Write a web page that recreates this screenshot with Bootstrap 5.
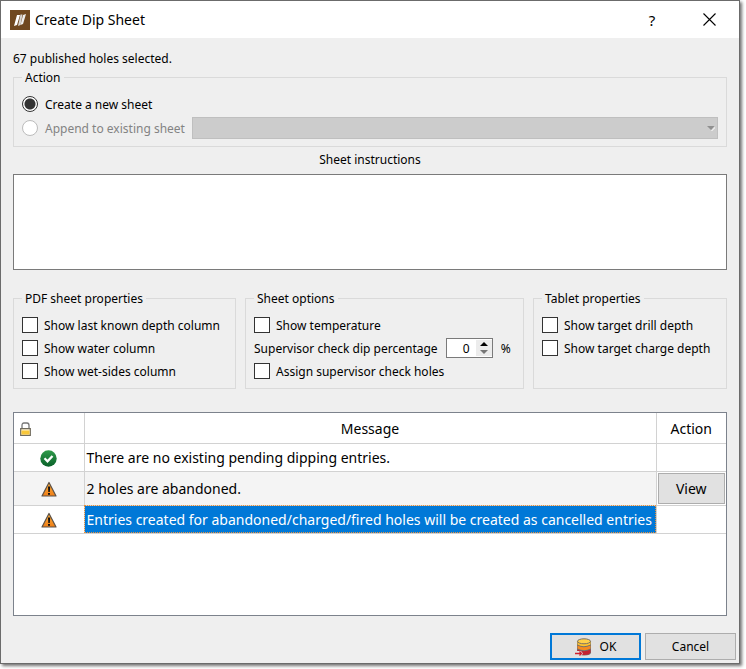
<!DOCTYPE html>
<html lang="en">
<head>
<meta charset="utf-8">
<meta name="viewport" content="width=device-width, initial-scale=1">
<title>Create Dip Sheet</title>
<link href="https://cdn.jsdelivr.net/npm/bootstrap@5.3.0/dist/css/bootstrap.min.css" rel="stylesheet">
<style>
  body { background: #fff; color: #000; font: 12px/16px "Noto Sans", "Open Sans", sans-serif; }
  .stage { padding: 0 6px 5px 0; }
  .dialog { background: #efefef; border: 1px solid #6b6b6b; box-shadow: 2px 2px 3px rgba(0,0,0,.55); }
  .titlebar { background: #fff; height: 37px; padding: 0 11px 0 9px; font-size: 14px; }
  .titlebar button { width: 38px; height: 30px; padding: 0; border: 0; background: none; color: #000; font-size: 15px; line-height: 20px; display: flex; align-items: center; justify-content: center; }
  .titlebar .gap-wide { gap: 19px; }
  .titlebar .gap-title { gap: 5px; }
  .content-area { padding: 13px 12px 0; }
  .count { margin-bottom: 1px; }
  .group { border: 1px solid #dadada; padding: 8px 8px 7px; min-width: 0; margin: 0; }
  .group legend { float: none; width: auto; margin: 0; padding: 1px 3px 0; font-size: 12px; line-height: 17px; }
  .group .stack { display: flex; flex-direction: column; gap: 3px; }
  .line { display: flex; align-items: center; min-height: 20px; gap: 6px; white-space: nowrap; }
  .line label, .unit { padding-top: 2px; }
  .line .form-check-input { flex: none; width: 16px; height: 16px; margin: 0; border: 1px solid #333; background-color: #fff; box-shadow: none; }
  .line .form-check-input[type=checkbox] { border-radius: 0; }
  .line .form-check-input[type=radio]:checked { background: #fff radial-gradient(circle, #333 0 5px, transparent 6px); border-color: #333; }
  .line .form-check-input:disabled { opacity: 1; border-color: #bcbcbc; }
  .line .muted-label { color: #838383; opacity: 1; }
  .action-group { padding-top: 7px; }
  .action-group .stack { gap: 2px; }
  .action-group .line { min-height: 22px; gap: 7px; }
  .sheet-select { height: 22px; min-height: 0; border: 1px solid #bfbfbf; border-radius: 0; padding: 0 16px 0 4px; font-size: 12px; background: #ccc url("data:image/svg+xml,%3Csvg xmlns='http://www.w3.org/2000/svg' viewBox='0 0 8 5'%3E%3Cpath d='M4 5h1l3-3V1z' fill='%23fff'/%3E%3Cpath d='M0 0h7.500L4 4z' fill='%23909090'/%3E%3C/svg%3E") no-repeat right 2px center / 8px 5px; }
  .sheet-select:disabled { background-color: #ccc; }
  .caption-label { margin-top: 5px; }
  .instructions { display: block; height: 96px; border: 1px solid #7a7a7a; border-radius: 0; resize: none; padding: 4px; margin: 6px 0 19px; font-size: 12px; background: #fff; }
  .options { display: grid; grid-template-columns: 223fr 279fr 194fr; gap: 9px; }
  .line.percent { gap: 8px; }
  .spin { display: flex; width: 47px; height: 20px; border: 1px solid #7a7a7a; background: #fff; }
  .spin input { width: 26px; border: 0; padding: 1px 3px 0 0; text-align: right; font: inherit; background: none; appearance: textfield; -moz-appearance: textfield; }
  .spin input::-webkit-inner-spin-button { display: none; }
  .spin .arrows { display: flex; flex-direction: column; width: 16px; margin: 1px 0 1px 3px; }
  .spin button { flex: 1; display: flex; align-items: center; justify-content: center; border: 0; padding: 0; background: #ececec; min-height: 0; }
  .spin .up { align-items: flex-end; padding-bottom: 2px; }
  .spin .down { align-items: flex-start; padding-top: 2px; }
  .messages { background: #fff; border: 1px solid #7c828c; margin-top: 23px; min-height: 120px; overflow: hidden; }
  .messages table { width: 100%; table-layout: fixed; border-collapse: collapse; font-size: 14px; line-height: 20px; }
  .messages th, .messages td { padding: 2px 2px 0; border: solid #d2d2d2; border-width: 0 1px 1px 0; vertical-align: middle; overflow: hidden; white-space: nowrap; font-weight: 400; }
  .messages tr > :last-child { border-right: 0; }
  .messages thead tr { height: 30px; }
  .messages th { text-align: center; }
  .messages th:first-child { text-align: left; padding-left: 6px; }
  .messages tbody tr { height: 28px; }
  .messages tbody tr.tall { height: 34px; }
  .messages tr.tall td:not(:last-child) { background: #f4f4f4; }
  .messages td:first-child { text-align: center; }
  .messages svg { display: block; }
  .messages td svg { margin: 0 auto; }
  .messages td.chosen { background: #0078d7; color: #fff; outline: 1px dotted #e8913c; outline-offset: -1px; }
  .messages td.action-cell { padding: 1px; }
  .push { border: 1px solid #adadad; background: #e1e1e1; color: #000; border-radius: 0; padding: 0; font-size: 12px; line-height: 16px; }
  .push.view { width: 100%; height: 31px; padding-top: 2px; font-size: 14px; display: block; }
  .footer-bar { padding: 17px 3px 3px; gap: 4px; }
  .footer-bar .push { width: 91px; height: 27px; }
  .push.primary { border: 2px solid #0078d7; }
</style>
</head>
<body>
<div class="stage d-flex flex-column min-vh-100">
  <main class="dialog d-flex flex-column flex-grow-1">
    <header class="titlebar d-flex align-items-center justify-content-between">
      <div class="d-flex align-items-center gap-title">
        <svg width="20" height="20" viewBox="0 0 20 20" aria-hidden="true"><path fill="#704820" d="M0 0h20v20H0z"/><path fill="#fff" d="M7 5h3L7 15l-3 1z"/><path fill="#d8d4d0" d="M10.500 4.500H12.500L10.500 15 8 16z"/><path fill="#eee" d="M13 5l3-1-3 10-2.500 1z"/></svg>
        <span>Create Dip Sheet</span>
      </div>
      <div class="d-flex gap-wide">
        <button type="button" aria-label="Help">?</button>
        <button type="button" aria-label="Close"><svg width="13" height="13" viewBox="0 0 13 13"><path d="M.5.500l12 12M12.500.500l-12 12" stroke="#000" stroke-width="1.100"/></svg></button>
      </div>
    </header>
    <form class="d-flex flex-column flex-grow-1">
      <div class="content-area d-flex flex-column flex-grow-1">
        <div class="count">67 published holes selected.</div>
        <fieldset class="group action-group">
          <legend>Action</legend>
          <div class="stack">
            <div class="line"><input class="form-check-input" type="radio" name="mode" id="create" checked><label for="create">Create a new sheet</label></div>
            <div class="line"><input class="form-check-input" type="radio" name="mode" id="append" disabled><label class="muted-label" for="append">Append to existing sheet</label><select class="form-select sheet-select" aria-label="Existing sheet" disabled></select></div>
          </div>
        </fieldset>
        <label class="caption-label text-center" for="instructions">Sheet instructions</label>
        <textarea class="form-control instructions" id="instructions"></textarea>
        <div class="options">
          <fieldset class="group">
            <legend>PDF sheet properties</legend>
            <div class="stack">
              <div class="line"><input class="form-check-input" type="checkbox" id="depth"><label for="depth">Show last known depth column</label></div>
              <div class="line"><input class="form-check-input" type="checkbox" id="water"><label for="water">Show water column</label></div>
              <div class="line"><input class="form-check-input" type="checkbox" id="wet"><label for="wet">Show wet-sides column</label></div>
            </div>
          </fieldset>
          <fieldset class="group">
            <legend>Sheet options</legend>
            <div class="stack">
              <div class="line"><input class="form-check-input" type="checkbox" id="temp"><label for="temp">Show temperature</label></div>
              <div class="line percent"><label for="pct">Supervisor check dip percentage</label>
                <div class="spin"><input type="number" id="pct" value="0" min="0" max="100"><span class="arrows"><button class="up" type="button" aria-label="Increase"><svg width="8" height="4" viewBox="0 0 8 4"><path d="M0 4l4-4 4 4z"/></svg></button><button class="down" type="button" aria-label="Decrease"><svg width="8" height="4" viewBox="0 0 8 4"><path fill="#777" d="M0 0h8L4 4z"/></svg></button></span></div>
                <span class="unit">%</span></div>
              <div class="line"><input class="form-check-input" type="checkbox" id="assign"><label for="assign">Assign supervisor check holes</label></div>
            </div>
          </fieldset>
          <fieldset class="group">
            <legend>Tablet properties</legend>
            <div class="stack">
              <div class="line"><input class="form-check-input" type="checkbox" id="drill"><label for="drill">Show target drill depth</label></div>
              <div class="line"><input class="form-check-input" type="checkbox" id="charge"><label for="charge">Show target charge depth</label></div>
            </div>
          </fieldset>
        </div>
        <div class="messages flex-grow-1">
          <table>
            <colgroup><col style="width:70px"><col><col style="width:70px"></colgroup>
            <thead><tr>
              <th scope="col" aria-label="Status"><svg width="11" height="14" viewBox="0 0 11 14"><path d="M2 7V3.500Q2 1 4 1h3q2 0 2 2.500V7" fill="none" stroke="#777" stroke-width="1.300"/><path d="M.7 6.700h9.600v6.600H.7z" fill="#fff3cf" stroke="#6f6a5c" stroke-width="1.200"/><path d="M1.500 8.500h8v4h-8z" fill="#f8c73a"/></svg></th>
              <th scope="col">Message</th><th scope="col">Action</th>
            </tr></thead>
            <tbody>
              <tr><td><svg width="17" height="17" viewBox="0 0 17 17"><defs><linearGradient id="gr" x2="0" y2="1"><stop stop-color="#2f9a4a"/><stop offset="1" stop-color="#0a612a"/></linearGradient></defs><circle cx="8.500" cy="8.500" r="8.200" fill="url(#gr)"/><path d="M4.500 8.300l3 3 5-5.300" fill="none" stroke="#fff" stroke-width="2.300"/></svg></td><td>There are no existing pending dipping entries.</td><td></td></tr>
              <tr class="tall"><td><svg width="16" height="16" viewBox="0 0 16 16"><defs><linearGradient id="og" x2="0" y2="1"><stop stop-color="#ffb03a"/><stop offset="1" stop-color="#ee7d16"/></linearGradient></defs><path d="M8 1.500 15 15H1z" fill="url(#og)" stroke="#5b5148" stroke-width="1.200" stroke-linejoin="round"/><path d="M7 5.500h2.200L8.800 11H7.300zM7 12h2v1.800H7z" fill="#111"/></svg></td><td>2 holes are abandoned.</td><td class="action-cell"><button type="button" class="push view">View</button></td></tr>
              <tr><td><svg width="16" height="16" viewBox="0 0 16 16"><path d="M8 1.500 15 15H1z" fill="url(#og)" stroke="#5b5148" stroke-width="1.200" stroke-linejoin="round"/><path d="M7 5.500h2.200L8.800 11H7.300zM7 12h2v1.800H7z" fill="#111"/></svg></td><td class="chosen">Entries created for abandoned/charged/fired holes will be created as cancelled entries</td><td></td></tr>
            </tbody>
          </table>
        </div>
      </div>
      <div class="footer-bar d-flex justify-content-end">
        <button type="button" class="push primary d-flex align-items-center justify-content-center gap-2"><svg width="17" height="18" viewBox="0 0 17 18" aria-hidden="true"><path d="M2 3v11.500q0 3 7 3t7-3V3z" fill="#74706c"/><path d="M2.500 11.500q6 3.500 13 0v3q-1 2.500-6.500 2.500-4 0-6.500-1.500z" fill="#c52331"/><path d="M2.500 7.500q6 3.500 13 0v3q-6 3.500-13 0z" fill="#f58a1f"/><path d="M2.500 3.500v3q6 3.500 13 0v-3z" fill="#ffc42e"/><ellipse cx="9" cy="3.300" rx="6.500" ry="2.500" fill="#ffd04a" stroke="#77706a"/><path d="M0 13h6l2 2.500L6 18H0z" fill="#e1e1e1"/><path d="M0 15.500h6.500M4.500 13.500l2 2-2 2" fill="none" stroke="#d0202e" stroke-width="1.300"/></svg><span>OK</span></button>
        <button type="button" class="push">Cancel</button>
      </div>
    </form>
  </main>
</div>
<script src="https://cdn.jsdelivr.net/npm/bootstrap@5.3.0/dist/js/bootstrap.bundle.min.js"></script>
</body>
</html>
